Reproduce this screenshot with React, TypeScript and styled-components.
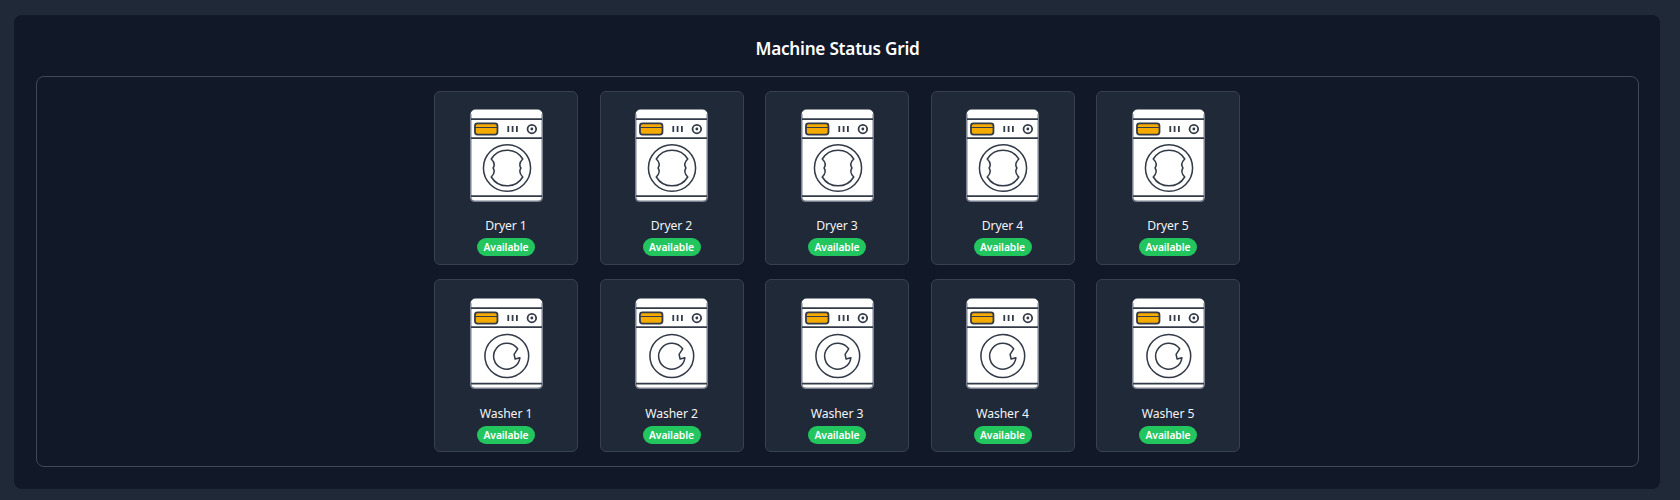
import React from 'react';
import styled, { createGlobalStyle } from 'styled-components';

type MachineKind = 'dryer' | 'washer';

type Machine = {
  name: string,
  kind: MachineKind,
};

const machines: Machine[] = [
  { name: 'Dryer 1', kind: 'dryer' },
  { name: 'Dryer 2', kind: 'dryer' },
  { name: 'Dryer 3', kind: 'dryer' },
  { name: 'Dryer 4', kind: 'dryer' },
  { name: 'Dryer 5', kind: 'dryer' },
  { name: 'Washer 1', kind: 'washer' },
  { name: 'Washer 2', kind: 'washer' },
  { name: 'Washer 3', kind: 'washer' },
  { name: 'Washer 4', kind: 'washer' },
  { name: 'Washer 5', kind: 'washer' },
];

const GlobalStyle = createGlobalStyle`
  html, body {
    margin: 0;
    padding: 0;
    background: #1f2937;
    font-family: "Noto Sans", "Open Sans", "Liberation Sans", sans-serif;
  }
`;

const Page = styled.div`
  box-sizing: border-box;
  height: 500px;
  padding: 15px 20px 11px 14px;
`;

const Panel = styled.section`
  box-sizing: border-box;
  height: 474px;
  padding: 21px 21px 22px 22px;
  background: #111827;
  border-radius: 8px;
  display: flex;
  flex-direction: column;
`;

const Title = styled.h2`
  margin: 0 0 14px;
  height: 26px;
  line-height: 26px;
  font-size: 17.2px;
  font-weight: 600;
  letter-spacing: -0.25px;
  text-align: center;
  color: #ffffff;
`;

const GridFrame = styled.div`
  box-sizing: border-box;
  flex: 1;
  padding: 14px 1px 14px 0;
  border: 1px solid #3f4957;
  border-radius: 8px;
`;

const Grid = styled.div`
  display: grid;
  grid-template-columns: repeat(5, 144px);
  justify-content: center;
  column-gap: 21.5px;
  row-gap: 14px;
`;

const Card = styled.div`
  box-sizing: border-box;
  height: 173.5px;
  padding-top: 17px;
  background: #1f2937;
  border: 1px solid #374151;
  border-radius: 6px;
  display: flex;
  flex-direction: column;
  align-items: center;
`;

const IconBox = styled.div<{ $kind: MachineKind }>`
  box-sizing: border-box;
  height: 93px;
  padding-top: ${(props) => (props.$kind === 'washer' ? '1px' : '0')};
  display: flex;
  align-items: flex-start;
`;

const Name = styled.div`
  margin-top: 15px;
  height: 18px;
  line-height: 18px;
  font-size: 12.2px;
  letter-spacing: -0.1px;
  color: #f3f4f6;
`;

const Badge = styled.span`
  margin-top: 3px;
  box-sizing: border-box;
  width: 58px;
  height: 18px;
  line-height: 18px;
  border-radius: 9px;
  background: #22c55e;
  color: #ffffff;
  font-size: 10.3px;
  font-weight: 600;
  letter-spacing: -0.1px;
  text-align: center;
`;

const Ink = '#333a48';

const DryerDoor = () => (
  <>
    <circle cx="36.5" cy="59" r="23.25" fill="none" stroke={Ink} strokeWidth="1.5" />
    <path
      d="M21 50 A18 18 0 0 1 52 50 C49 53 48.6 56.5 50.2 59 C48.6 61.5 49 65 52 68 A18 18 0 0 1 21 68 C24 65 24.4 61.5 22.8 59 C24.4 56.5 24 53 21 50 Z"
      fill="none"
      stroke={Ink}
      strokeWidth="1.5"
    />
  </>
);

const WasherDoor = () => (
  <>
    <circle cx="36.3" cy="58" r="21.6" fill="none" stroke={Ink} strokeWidth="1.5" />
    <path
      d="M47 50.8 A13 13 0 1 0 49.2 59.8 L44.5 61 L43.5 56.3 Z"
      fill="none"
      stroke={Ink}
      strokeWidth="1.5"
      strokeLinejoin="round"
    />
  </>
);

const MachineIcon = ({ kind }: { kind: MachineKind }) => {
  const height = kind === 'dryer' ? 93 : 91;
  const bottomLine = kind === 'dryer' ? 87 : 85.5;
  return (
    <svg width="73" height={height} viewBox={`0 0 72 ${height}`} preserveAspectRatio="none">
      <rect x="0.5" y="0.5" width="71" height={height - 1} rx="5" fill="#ffffff" />
      <path
        d={`M0.75 5 V${height - 5} Q0.75 ${height - 0.75} 5 ${height - 0.75} H67 Q71.25 ${height - 0.75} 71.25 ${height - 5} V5`}
        fill="none"
        stroke="#7b8190"
        strokeWidth="1.5"
      />
      <path
        d={`M1 10 H71 M1 29 H71 M1 ${bottomLine} H71`}
        fill="none"
        stroke={Ink}
        strokeWidth="1.75"
      />
      <rect x="4.9" y="14.4" width="22.2" height="11.2" rx="2.5" fill="#f6ab00" stroke={Ink} strokeWidth="1.75" />
      <path d="M5 18.5 H27" stroke={Ink} strokeWidth="1" />
      <path d="M37.75 17 V23 M42 17 V23 M46.25 17 V23" stroke={Ink} strokeWidth="1.75" />
      <circle cx="61" cy="20" r="4.25" fill="#ffffff" stroke={Ink} strokeWidth="1.75" />
      <circle cx="61" cy="20" r="1.4" fill={Ink} />
      {kind === 'dryer' ? <DryerDoor /> : <WasherDoor />}
    </svg>
  );
};

const MachineCard = ({ name, kind }: Machine) => {
  return (
    <Card>
      <IconBox $kind={kind}>
        <MachineIcon kind={kind} />
      </IconBox>
      <Name>{name}</Name>
      <Badge>Available</Badge>
    </Card>
  );
};

const App = () => {
  return (
    <Page>
      <GlobalStyle />
      <Panel>
        <Title>Machine Status Grid</Title>
        <GridFrame>
          <Grid>
            {machines.map((machine) => (
              <MachineCard key={machine.name} name={machine.name} kind={machine.kind} />
            ))}
          </Grid>
        </GridFrame>
      </Panel>
    </Page>
  );
};

export default App;
